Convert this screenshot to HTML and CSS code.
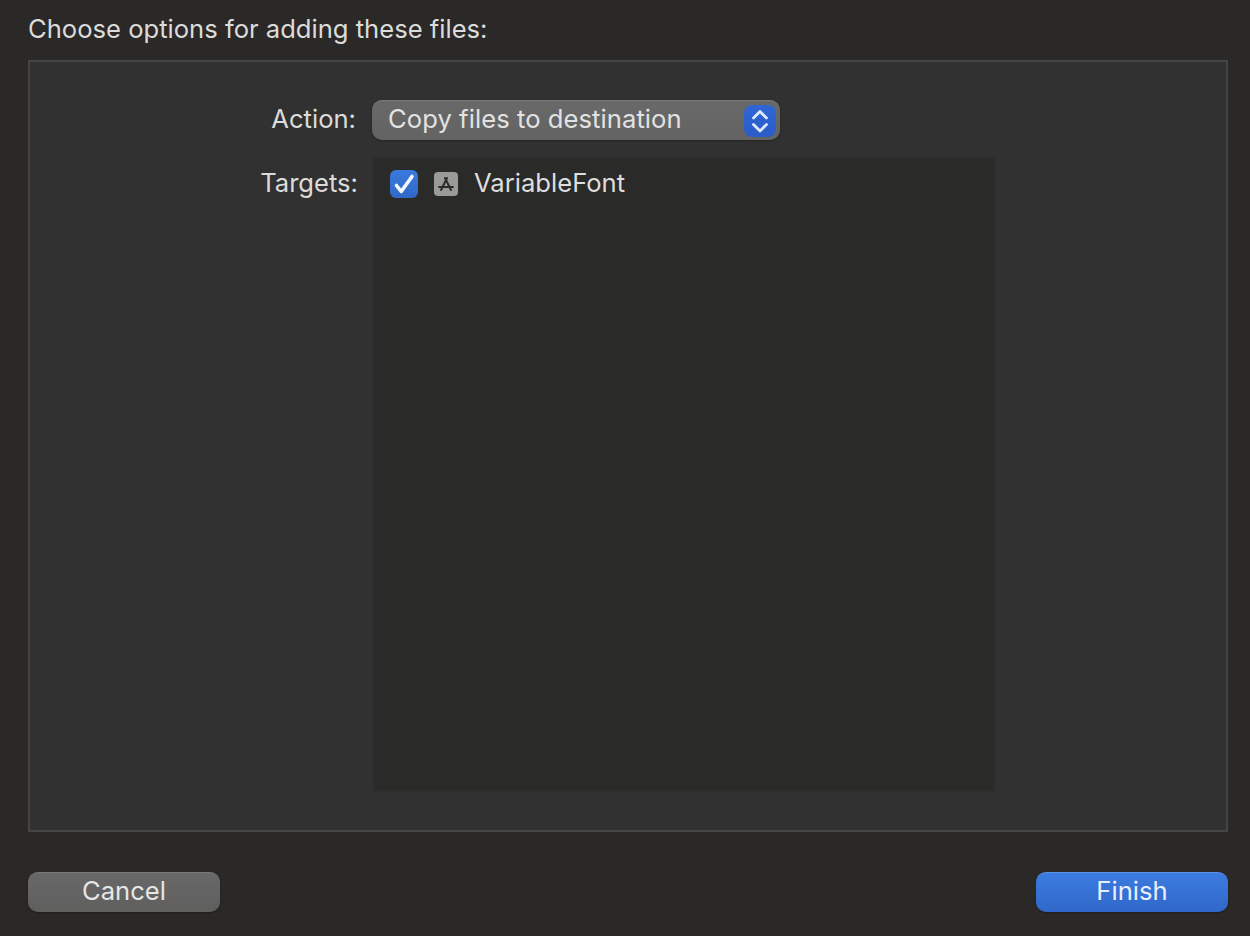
FILE: index.html
```html
<!DOCTYPE html>
<html lang="en">
<head>
<meta charset="utf-8">
<title>Choose options</title>
<link rel="stylesheet" href="styles.css">
</head>
<body>
<main class="dialog">
  <h1 class="title">Choose options for adding these files:</h1>
  <section class="panel">
    <div class="row action-row">
      <span class="label">Action:</span>
      <div class="select">
        <span class="select-text">Copy files to destination</span>
        <span class="stepper">
          <svg width="32" height="32" viewBox="0 0 32 32" fill="none" stroke="#dfe8fb" stroke-width="2.8" stroke-linecap="round" stroke-linejoin="round"><path d="M9.5 13 16 6.5l6.5 6.5"/><path d="M9.5 19.5 16 26l6.5-6.5"/></svg>
        </span>
      </div>
    </div>
    <div class="row targets-row">
      <span class="label label-targets">Targets:</span>
      <div class="list">
        <div class="list-item">
          <span class="checkbox">
            <svg width="28" height="28" viewBox="0 0 28 28" fill="none" stroke="#f4f7fe" stroke-width="3.6" stroke-linecap="round" stroke-linejoin="round"><path d="M6.5 15.5l4.7 6L22 6.5"/></svg>
          </span>
          <span class="app-icon">
            <svg width="24" height="24" viewBox="0 0 24 24" fill="none" stroke="#2c2c2a" stroke-linecap="round"><path stroke-width="2" d="M13 6 7 18"/><path stroke-width="2" d="M11 6l6 12"/><path stroke-width="1.8" d="M5 15h14"/></svg>
          </span>
          <span class="item-name">VariableFont</span>
        </div>
      </div>
    </div>
  </section>
  <footer class="footer">
    <button class="btn btn-cancel" type="button">Cancel</button>
    <button class="btn btn-finish" type="button">Finish</button>
  </footer>
</main>
</body>
</html>
```
FILE: styles.css
```css
* { box-sizing: border-box; }
html, body { margin: 0; height: 100%; }
body {
  background: #2a2928;
  color: #dcdcdb;
  font-family: "Inter", "Liberation Sans", sans-serif;
  font-size: 25.6px;
  line-height: 30px;
  overflow: hidden;
}
.dialog {
  width: 1250px;
  height: 936px;
  padding: 14px 22px 24px 28px;
  display: flex;
  flex-direction: column;
}
.title {
  margin: 0 0 16px;
  font: inherit;
}
.panel {
  height: 772px;
  background: #313131;
  border: 2px solid #454545;
  padding-top: 38px;
  display: flex;
  flex-direction: column;
  gap: 16px;
}
.row {
  display: grid;
  grid-template-columns: 326px auto;
  column-gap: 16px;
  justify-content: start;
}
.label { text-align: right; }
.action-row { align-items: start; }
.action-row .label { padding-top: 4px; }
.label-targets { margin-right: -2px; padding-top: 12px; }
.select {
  width: 408px;
  height: 40px;
  border-radius: 10px;
  background: linear-gradient(#696969, #636363);
  border-top: 1px solid #7a7a7a;
  box-shadow: 0 1px 2px rgba(0,0,0,.3);
  display: flex;
  align-items: center;
  justify-content: space-between;
  padding: 0 4px 0 16px;
}
.select-text { color: #e2e2e2; padding-bottom: 3px; letter-spacing: .06px; }
.stepper {
  width: 32px;
  height: 32px;
  border-radius: 8px;
  background: linear-gradient(#2f66d6, #2a5cc7);
  display: flex;
}
.list {
  width: 624px;
  height: 636px;
  background: #2a2a29;
  border: 2px solid #2e2e2e;
  padding: 10px 16px;
}
.list-item {
  display: flex;
  align-items: center;
  height: 32px;
}
.checkbox {
  width: 28px;
  height: 28px;
  border-radius: 6px;
  background: linear-gradient(#3b79de, #3068c8);
  display: flex;
}
.app-icon {
  width: 24px;
  height: 24px;
  margin-left: 16px;
  border-radius: 4px;
  background: #9a9a98;
  display: flex;
}
.item-name { margin-left: 16px; color: #dedede; padding-bottom: 2px; }
.footer {
  margin-top: 40px;
  display: flex;
  justify-content: space-between;
}
.btn {
  width: 192px;
  height: 40px;
  border: 0;
  border-radius: 10px;
  font: inherit;
  padding: 0 0 4px;
  box-shadow: 0 1px 2px rgba(0,0,0,.3);
}
.btn-cancel {
  background: linear-gradient(#686868, #605f5e);
  border-top: 1px solid #777;
  color: #e6e6e6;
}
.btn-finish {
  background: linear-gradient(#3c7be0, #2f68c8);
  border-top: 1px solid #5a8fe6;
  color: #e8eefb;
}
```
